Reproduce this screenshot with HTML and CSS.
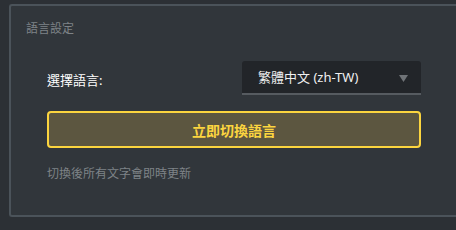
FILE: index.html
```html
<!DOCTYPE html>
<html lang="zh-Hant">
<head>
    <meta charset="UTF-8">
    <meta name="viewport" content="width=device-width, initial-scale=1.0">
    <title>語言設定</title>
    <link rel="stylesheet" href="styles.css">
</head>
<body>

    <div class="panel">
        <div class="panel-title">語言設定</div>

        <div class="panel-body">
            <div class="row">
                <label class="row-label" for="langSelect">選擇語言:</label>
                <div class="select-wrap">
                    <select id="langSelect" class="lang-select">
                        <option value="zh-TW" selected>繁體中文 (zh-TW)</option>
                        <option value="zh-CN">简体中文 (zh-CN)</option>
                        <option value="en">English (en)</option>
                    </select>
                    <svg class="select-arrow" width="9" height="7" viewBox="0 0 9 7">
                        <path d="M0 0 H9 L4.5 7 Z" fill="#6f7377"/>
                    </svg>
                </div>
            </div>

            <button class="apply-btn">立即切換語言</button>

            <p class="hint">切換後所有文字會即時更新</p>
        </div>
    </div>

</body>
</html>
```

FILE: styles.css
```css
body {
    margin: 0;
    padding: 4px 0 0 9px;
    background-color: #2c3035;
    font-family: 'Segoe UI', 'Noto Sans', 'Noto Sans CJK TC', sans-serif;
    overflow: hidden;
    height: 230px;
    box-sizing: border-box;
}

/* panel runs off the right side, so no right border */
.panel {
    width: 447px;
    height: 213px;
    box-sizing: border-box;
    background-color: #31363b;
    border: 2px solid #4b535a;
    border-right: none;
    border-radius: 3px 0 0 3px;
    padding: 15px 0 0 15px;
}

.panel-title {
    font-size: 12px;
    line-height: 16px;
    color: #7e8387;
}

.panel-body {
    width: 374px;
    margin: 24px 0 0 21px;
}

.row {
    display: flex;
    align-items: center;
    justify-content: space-between;
    height: 34px;
}

.row-label {
    font-size: 13px;
    color: #ffffff;
    padding-top: 2px;
}

.select-wrap {
    position: relative;
    width: 179px;
    height: 34px;
}

.lang-select {
    appearance: none;
    -webkit-appearance: none;
    width: 100%;
    height: 100%;
    margin: 0;
    padding: 0 0 0 16px;
    background-color: #222529;
    color: #f0f0f0;
    border: none;
    border-bottom: 2px solid #565b60;
    border-radius: 3px 3px 0 0;
    font-family: inherit;
    font-size: 13px;
    outline: none;
}

.select-arrow {
    position: absolute;
    right: 13px;
    top: 14px;
    pointer-events: none;
}

.apply-btn {
    display: block;
    width: 100%;
    height: 37px;
    margin-top: 16px;
    padding: 0;
    background-color: #5c5640;
    color: #fcd53f;
    border: 2px solid #fcd53f;
    border-radius: 4px;
    font-family: inherit;
    font-size: 14px;
    font-weight: bold;
    cursor: pointer;
}

.hint {
    margin: 18px 0 0;
    font-size: 12px;
    line-height: 16px;
    color: #7e8387;
}
```
